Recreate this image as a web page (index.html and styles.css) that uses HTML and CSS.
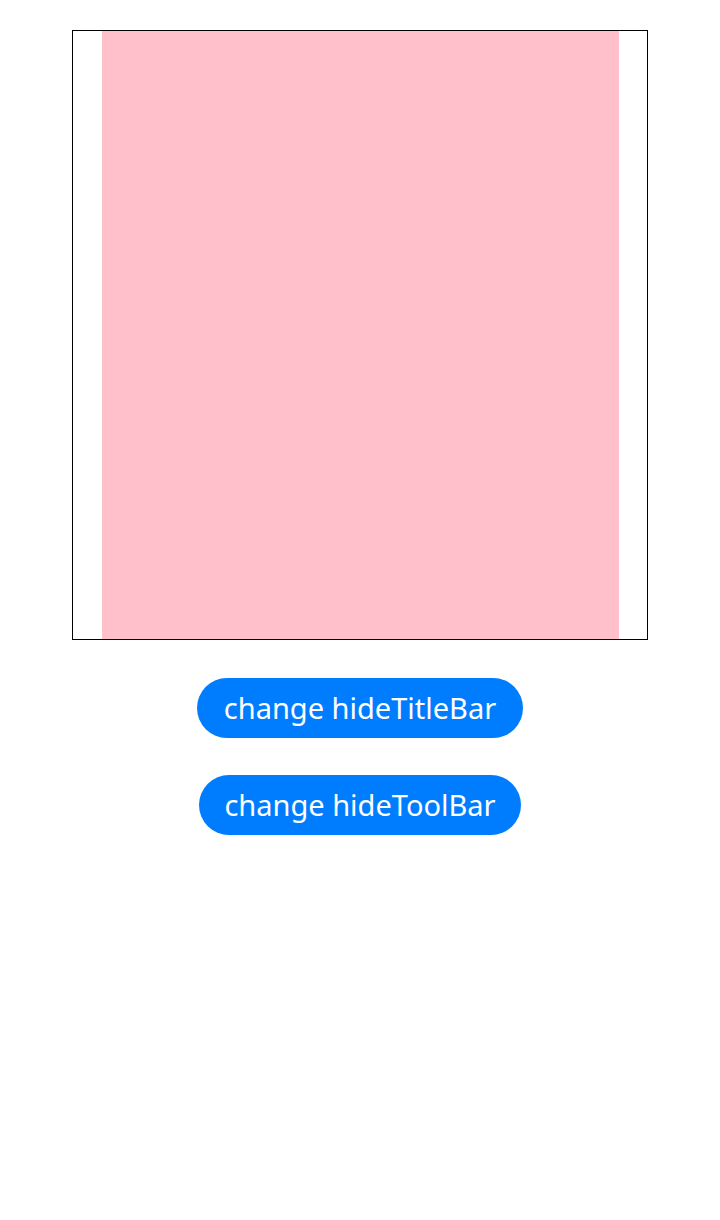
FILE: index.html
```html
<!DOCTYPE html>
<html>
<head>
<meta charset="utf-8">
<link rel="stylesheet" href="styles.css">
</head>
<body>
<div class="page">
  <div class="frame">
    <div class="content"></div>
  </div>
  <button class="btn btn-title">change hideTitleBar</button>
  <button class="btn btn-tool">change hideToolBar</button>
</div>
</body>
</html>
```
FILE: styles.css
```css
html, body {
  margin: 0;
  padding: 0;
  background: #ffffff;
}
.page {
  display: flex;
  flex-direction: column;
  align-items: center;
  padding-top: 30px;
}
.frame {
  width: 576px;
  height: 610px;
  box-sizing: border-box;
  border: 1px solid #000000;
  display: flex;
  justify-content: center;
}
.content {
  width: 517px;
  height: 100%;
  background: #ffc0cb;
}
.btn {
  height: 60px;
  border: none;
  border-radius: 30px;
  background: #007dff;
  color: #ffffff;
  font-family: "Noto Sans", sans-serif;
  font-size: 29px;
  padding: 0;
  line-height: 60px;
}
.btn-title {
  margin-top: 38px;
  width: 326px;
}
.btn-tool {
  margin-top: 37px;
  width: 322px;
}
```
